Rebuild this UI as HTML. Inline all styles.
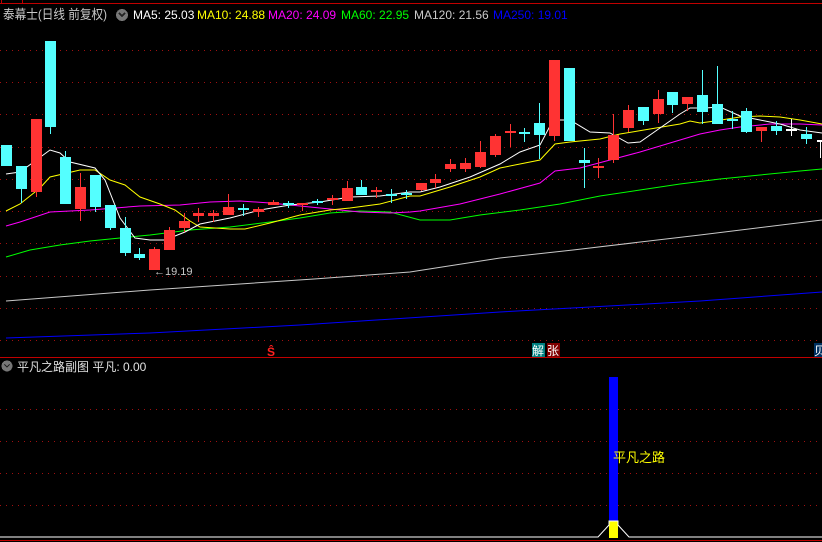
<!DOCTYPE html><html><head><meta charset="utf-8"><style>
html,body{margin:0;padding:0;background:#000;width:822px;height:542px;overflow:hidden}
svg{display:block}
text{font-family:"Liberation Sans","Noto Sans CJK SC",sans-serif}
</style></head><body>
<svg width="822" height="542" viewBox="0 0 822 542" xmlns="http://www.w3.org/2000/svg" shape-rendering="crispEdges">
<rect width="822" height="542" fill="#000"/>
<line x1="0" y1="3.5" x2="822" y2="3.5" stroke="#c00000"/>
<line x1="1.5" y1="0" x2="1.5" y2="4" stroke="#c00000"/>
<line x1="22.5" y1="0" x2="22.5" y2="4" stroke="#c00000"/>
<g stroke="#a01010" stroke-dasharray="1 5">
<line x1="0" y1="50.5" x2="822" y2="50.5"/><line x1="0" y1="82.5" x2="822" y2="82.5"/><line x1="0" y1="114.5" x2="822" y2="114.5"/><line x1="0" y1="147.5" x2="822" y2="147.5"/><line x1="0" y1="179.5" x2="822" y2="179.5"/><line x1="0" y1="211.5" x2="822" y2="211.5"/><line x1="0" y1="243.5" x2="822" y2="243.5"/><line x1="0" y1="276.5" x2="822" y2="276.5"/><line x1="0" y1="308.5" x2="822" y2="308.5"/><line x1="0" y1="340.5" x2="822" y2="340.5"/>
<line x1="0" y1="409.5" x2="822" y2="409.5"/><line x1="0" y1="441.5" x2="822" y2="441.5"/><line x1="0" y1="473.5" x2="822" y2="473.5"/><line x1="0" y1="505.5" x2="822" y2="505.5"/>
</g>
<line x1="0" y1="357.5" x2="822" y2="357.5" stroke="#c00000"/>
<line x1="0" y1="540.5" x2="822" y2="540.5" stroke="#c00000"/>
<text x="3" y="19" font-size="13" fill="#c8c8c8" textLength="104" lengthAdjust="spacingAndGlyphs">泰幕士(日线 前复权)</text>
<circle cx="122" cy="15" r="6" fill="#777"/><path d="M119 13l3 3 3-3" stroke="#222" fill="none" stroke-width="1.5"/>
<text y="19" font-size="12"><tspan x="133" fill="#fff">MA5: 25.03</tspan><tspan x="197" fill="#ff0">MA10: 24.88</tspan><tspan x="268" fill="#f0f">MA20: 24.09</tspan><tspan x="341" fill="#0f0">MA60: 22.95</tspan><tspan x="414" fill="#ccc">MA120: 21.56</tspan><tspan x="493" fill="#0000ff">MA250: 19.01</tspan></text>
<g fill="none" stroke-width="1" shape-rendering="auto">
<polyline stroke="#0000ff" points="6,338 150,333 300,325 500,312 700,301 822,292"/>
<polyline stroke="#c8c8c8" points="6,301 150,290 314,279 410,272 500,258 573,250 700,235 822,220"/>
<polyline stroke="#00ff00" points="6,257 30,250 60,245 90,241 120,238 150,235 190,230 230,227 270,222 300,218 330,213 360,211 390,212 420,220 450,220 480,215 520,210 560,204 600,196 640,190 680,184 720,179 760,175 800,171 822,169"/>
<polyline stroke="#ff00ff" points="6,226 20,222 50,212 70,211 90,210 140,206 180,205 210,202 240,201 270,203 300,206 330,209 360,212 390,213 410,212 420,211 460,204 500,194 540,183 555,171 580,168 610,160 640,152 670,143 700,134 720,130 740,127 770,124 800,124 822,125"/>
<polyline stroke="#ffff00" points="6,211 20,204 40,188 50,177 80,170 95,170 110,180 125,185 140,197 160,204 175,210 190,221 200,227 230,229 245,229 270,223 300,215 330,210 350,208 380,204 410,196 420,196 450,187 480,177 500,168 540,160 555,144 570,142 600,139 620,134 650,129 680,124 690,121 700,123 715,121 740,117 760,116 780,117 800,120 822,124"/>
<polyline stroke="#fff" points="6,174 20,172 50,150 60,153 70,162 95,168 105,180 120,218 135,238 150,240 165,240 185,232 200,224 230,218 260,210 290,205 320,202 350,197 380,196 410,192 420,192 440,187 470,177 500,164 520,152 540,145 550,126 558,120 570,120 590,132 610,133 628,143 640,142 660,128 680,114 690,108 705,108 720,107 740,116 760,120 780,124 800,130 822,133"/>
</g>
<g stroke="#54ffff" fill="#54ffff">
<line x1="6.5" y1="145" x2="6.5" y2="166"/><rect x="1" y="145" width="11" height="21" stroke="none"/>
<line x1="21.5" y1="166" x2="21.5" y2="203"/><rect x="16" y="166" width="11" height="23" stroke="none"/>
<line x1="50.5" y1="41" x2="50.5" y2="134"/><rect x="45" y="41" width="11" height="86" stroke="none"/>
<line x1="65.5" y1="151" x2="65.5" y2="204"/><rect x="60" y="157" width="11" height="47" stroke="none"/>
<line x1="95.5" y1="175" x2="95.5" y2="212"/><rect x="90" y="175" width="11" height="32" stroke="none"/>
<line x1="110.5" y1="205" x2="110.5" y2="230"/><rect x="105" y="205" width="11" height="23" stroke="none"/>
<line x1="125.5" y1="217" x2="125.5" y2="256"/><rect x="120" y="228" width="11" height="25" stroke="none"/>
<line x1="139.5" y1="248" x2="139.5" y2="260"/><rect x="134" y="254" width="11" height="4" stroke="none"/>
<line x1="243.5" y1="204" x2="243.5" y2="216"/><rect x="238" y="208" width="11" height="2" stroke="none"/>
<line x1="288.5" y1="201" x2="288.5" y2="208"/><rect x="283" y="203" width="11" height="2" stroke="none"/>
<line x1="317.5" y1="199" x2="317.5" y2="205"/><rect x="312" y="201" width="11" height="2" stroke="none"/>
<line x1="361.5" y1="180" x2="361.5" y2="195"/><rect x="356" y="187" width="11" height="8" stroke="none"/>
<line x1="391.5" y1="189" x2="391.5" y2="203"/><rect x="386" y="194" width="11" height="2" stroke="none"/>
<line x1="406.5" y1="190" x2="406.5" y2="199"/><rect x="401" y="193" width="11" height="2" stroke="none"/>
<line x1="524.5" y1="128" x2="524.5" y2="142"/><rect x="519" y="132" width="11" height="2" stroke="none"/>
<line x1="539.5" y1="103" x2="539.5" y2="159"/><rect x="534" y="123" width="11" height="12" stroke="none"/>
<rect x="564" y="68" width="11" height="73" stroke="none"/>
<line x1="584.5" y1="148" x2="584.5" y2="188"/><rect x="579" y="160" width="11" height="3" stroke="none"/>
<line x1="643.5" y1="107" x2="643.5" y2="125"/><rect x="638" y="107" width="11" height="14" stroke="none"/>
<line x1="672.5" y1="92" x2="672.5" y2="113"/><rect x="667" y="92" width="11" height="13" stroke="none"/>
<line x1="702.5" y1="70" x2="702.5" y2="124"/><rect x="697" y="95" width="11" height="17" stroke="none"/>
<line x1="717.5" y1="66" x2="717.5" y2="124"/><rect x="712" y="104" width="11" height="20" stroke="none"/>
<line x1="732.5" y1="111" x2="732.5" y2="129"/><rect x="727" y="119" width="11" height="2" stroke="none"/>
<line x1="746.5" y1="108" x2="746.5" y2="133"/><rect x="741" y="111" width="11" height="21" stroke="none"/>
<line x1="776.5" y1="121" x2="776.5" y2="135"/><rect x="771" y="126" width="11" height="5" stroke="none"/>
<line x1="806.5" y1="127" x2="806.5" y2="144"/><rect x="801" y="134" width="11" height="5" stroke="none"/>
</g>
<g stroke="#ff3333" fill="#ff3333">
<line x1="36.5" y1="119" x2="36.5" y2="197"/><rect x="31" y="119" width="11" height="73" stroke="none"/>
<line x1="80.5" y1="173" x2="80.5" y2="221"/><rect x="75" y="187" width="11" height="22" stroke="none"/>
<line x1="154.5" y1="247" x2="154.5" y2="270"/><rect x="149" y="249" width="11" height="21" stroke="none"/>
<line x1="169.5" y1="227" x2="169.5" y2="250"/><rect x="164" y="230" width="11" height="20" stroke="none"/>
<line x1="184.5" y1="213" x2="184.5" y2="232"/><rect x="179" y="221" width="11" height="7" stroke="none"/>
<line x1="198.5" y1="208" x2="198.5" y2="222"/><rect x="193" y="213" width="11" height="3" stroke="none"/>
<line x1="213.5" y1="210" x2="213.5" y2="222"/><rect x="208" y="213" width="11" height="3" stroke="none"/>
<line x1="228.5" y1="194" x2="228.5" y2="215"/><rect x="223" y="207" width="11" height="8" stroke="none"/>
<line x1="258.5" y1="207" x2="258.5" y2="217"/><rect x="253" y="209" width="11" height="3" stroke="none"/>
<line x1="273.5" y1="200" x2="273.5" y2="205"/><rect x="268" y="202" width="11" height="3" stroke="none"/>
<line x1="302.5" y1="203" x2="302.5" y2="211"/><rect x="297" y="203" width="11" height="2" stroke="none"/>
<line x1="332.5" y1="195" x2="332.5" y2="205"/><rect x="327" y="198" width="11" height="2" stroke="none"/>
<line x1="347.5" y1="181" x2="347.5" y2="201"/><rect x="342" y="188" width="11" height="13" stroke="none"/>
<line x1="376.5" y1="187" x2="376.5" y2="198"/><rect x="371" y="190" width="11" height="2" stroke="none"/>
<line x1="421.5" y1="183" x2="421.5" y2="191"/><rect x="416" y="183" width="11" height="7" stroke="none"/>
<line x1="435.5" y1="174" x2="435.5" y2="188"/><rect x="430" y="179" width="11" height="4" stroke="none"/>
<line x1="450.5" y1="159" x2="450.5" y2="172"/><rect x="445" y="164" width="11" height="5" stroke="none"/>
<line x1="465.5" y1="158" x2="465.5" y2="172"/><rect x="460" y="163" width="11" height="6" stroke="none"/>
<line x1="480.5" y1="141" x2="480.5" y2="168"/><rect x="475" y="152" width="11" height="15" stroke="none"/>
<line x1="495.5" y1="134" x2="495.5" y2="157"/><rect x="490" y="136" width="11" height="19" stroke="none"/>
<line x1="510.5" y1="124" x2="510.5" y2="147"/><rect x="505" y="131" width="11" height="2" stroke="none"/>
<line x1="554.5" y1="60" x2="554.5" y2="141"/><rect x="549" y="60" width="11" height="76" stroke="none"/>
<line x1="598.5" y1="158" x2="598.5" y2="178"/><rect x="593" y="166" width="11" height="2" stroke="none"/>
<line x1="613.5" y1="114" x2="613.5" y2="163"/><rect x="608" y="135" width="11" height="25" stroke="none"/>
<line x1="628.5" y1="105" x2="628.5" y2="132"/><rect x="623" y="110" width="11" height="18" stroke="none"/>
<line x1="658.5" y1="90" x2="658.5" y2="123"/><rect x="653" y="99" width="11" height="15" stroke="none"/>
<line x1="687.5" y1="97" x2="687.5" y2="111"/><rect x="682" y="97" width="11" height="7" stroke="none"/>
<line x1="761.5" y1="127" x2="761.5" y2="142"/><rect x="756" y="127" width="11" height="4" stroke="none"/>
</g>
<g stroke="#fff" fill="#fff">
<line x1="791.5" y1="119" x2="791.5" y2="136"/><rect x="786" y="129" width="11" height="2" stroke="none"/>
<line x1="820.5" y1="140" x2="820.5" y2="158"/><rect x="817" y="140" width="5" height="2" stroke="none"/>
</g>
<text x="154" y="275" font-size="11" fill="#c8c8c8">←19.19</text>
<text x="267" y="356" font-size="12" fill="#ff2020" font-weight="bold">Ŝ</text>
<rect x="532" y="343" width="13" height="14" fill="#008080"/><text x="532" y="355" font-size="12" fill="#fff">解</text>
<rect x="547" y="343" width="13" height="14" fill="#800000"/><text x="547" y="355" font-size="12" fill="#fff">张</text>
<rect x="814" y="343" width="8" height="14" fill="#003060"/><text x="814" y="355" font-size="12" fill="#fff">贝</text>
<circle cx="7" cy="366" r="5.5" fill="#777"/><path d="M4.5 364.5l2.5 2.5 2.5-2.5" stroke="#222" fill="none" stroke-width="1.3"/>
<text x="17" y="371" font-size="12" fill="#e0e0e0">平凡之路副图 平凡: 0.00</text>
<rect x="609" y="377" width="9" height="144" fill="#0000ff"/>
<rect x="609" y="521" width="9" height="17" fill="#ffff00"/>
<polyline shape-rendering="auto" fill="none" stroke="#fff" points="0,537 598,537 609,525 609,521 618,521 618,525 629,537 822,537"/>
<text x="613" y="462" font-size="13" fill="#ffff00">平凡之路</text>
</svg>
</body></html>
